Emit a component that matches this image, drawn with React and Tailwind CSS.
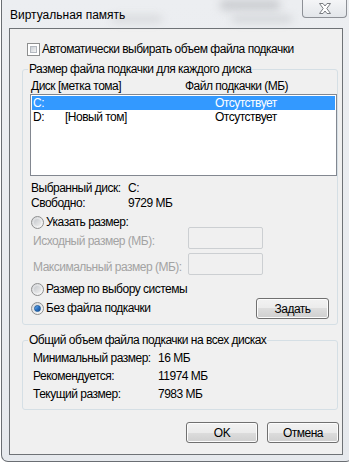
import React from "react";

const font = { fontFamily: '"Liberation Sans", Arial, sans-serif' };

function Checkbox() {
  return (
    <div className="w-[13px] h-[13px] border border-[#8e8f8f] bg-white p-[2px] shrink-0">
      <div className="w-full h-full border border-[#b4b9c0] bg-gradient-to-br from-[#cbd0d6] to-[#f4f4f4]" />
    </div>
  );
}

function Radio({ checked }) {
  return (
    <div className="w-[13px] h-[13px] rounded-full border border-[#8e8f8f] bg-gradient-to-br from-[#d4d6d9] to-[#fbfbfb] flex items-center justify-center shrink-0">
      {checked ? (
        <div className="w-[7px] h-[7px] rounded-full bg-gradient-to-br from-[#7ab8ee] via-[#2d75c7] to-[#144e91] border border-[#1c5a9c]" />
      ) : (
        <div className="w-[7px] h-[7px] rounded-full bg-gradient-to-br from-[#c6c9cd] to-[#eeeeee]" />
      )}
    </div>
  );
}

function Button({ children, w }) {
  return (
    <div
      className={`${w} h-[21px] rounded-[3px] border border-[#707070] flex items-center justify-center text-[12px] text-black bg-[linear-gradient(#f2f2f2_0%,#ebebeb_50%,#dddddd_50%,#cfcfcf_100%)] shadow-[inset_0_0_0_1px_#fcfcfc]`}
    >
      {children}
    </div>
  );
}

export default function App() {
  return (
    <div className="w-[349px] h-[464px] overflow-hidden bg-white whitespace-nowrap" style={font}>
      <div className="ml-[1px] w-[352px] h-[462px] rounded-b-[7px] border-x border-b border-[#6a6e73] bg-[linear-gradient(180deg,#eceef1_0%,#e6e9ed_100%)] flex flex-col">
        {/* Title bar */}
        <div className="h-[28px] shrink-0 flex items-start justify-between relative">
          <div className="pl-[8px] pt-[7px] text-[12px] leading-[16px] text-black relative z-10">Виртуальная память</div>
          <div className="absolute left-[218px] top-[0px] w-[60px] h-[10px] bg-[#c9cbcf] blur-[4px] rounded" />
          <div className="absolute left-[110px] top-[16px] w-[50px] h-[6px] bg-[#d3d5d8] blur-[4px] rounded" />
          <div className="absolute left-[230px] top-[16px] w-[60px] h-[6px] bg-[#cdd0d3] blur-[4px] rounded" />
          <div className="mr-[5px] w-[45px] h-[18px] rounded-b-[4px] border-x border-b border-[#8d9096] bg-[linear-gradient(#f4f5f7,#e3e6ea)] flex items-center justify-center relative">
            <svg width="14" height="11" viewBox="0 0 14 11">
              <path
                d="M1.5 0.5 H5 L7 3 L9 0.5 H12.5 L8.8 5.5 L12.5 10.5 H9 L7 8 L5 10.5 H1.5 L5.2 5.5 Z"
                fill="#ffffff"
                stroke="#7a7d82"
                strokeWidth="1"
                strokeLinejoin="round"
              />
            </svg>
          </div>
        </div>

        {/* Client area */}
        <div className="ml-[7px] w-[334px] h-[427px] shrink-0 border border-[#6e7276] bg-[#f0f0f0] flex flex-col text-[12px] tracking-[-0.5px] text-black">
          {/* Checkbox row */}
          <div className="mt-[14px] ml-[17px] flex items-center gap-[2px] h-[13px]">
            <Checkbox />
            <span className="leading-[13px]">Автоматически выбирать объем файла подкачки</span>
          </div>

          {/* Group 1 */}
          <fieldset className="mt-[6px] ml-[12px] w-[316px] border border-[#d5dfe5] rounded-[3px] pb-[5px]">
            <legend className="ml-[5px] px-[1px] leading-[14px]">Размер файла подкачки для каждого диска</legend>
            <div className="mt-[3px] flex leading-[14px] h-[14px]">
              <span className="ml-[8px] w-[154px]">Диск [метка тома]</span>
              <span>Файл подкачки (МБ)</span>
            </div>
            <div className="mt-[1px] ml-[7px] w-[307px] h-[82px] border border-[#828790] bg-white px-[1px] pt-[1px]">
              <div className="h-[14px] bg-[#3399ff] text-white flex items-center leading-[14px]">
                <span className="ml-[1px] w-[182px]">C:</span>
                <span>Отсутствует</span>
              </div>
              <div className="h-[14px] flex items-center leading-[14px]">
                <span className="ml-[1px] w-[32px]">D:</span>
                <span className="w-[150px]">[Новый том]</span>
                <span>Отсутствует</span>
              </div>
            </div>

            <div className="mt-[5px] ml-[8px] flex leading-[15px]">
              <span className="w-[97px]">Выбранный диск:</span>
              <span>C:</span>
            </div>
            <div className="ml-[8px] flex leading-[15px]">
              <span className="w-[97px]">Свободно:</span>
              <span>9729 МБ</span>
            </div>

            <div className="mt-[5px] ml-[8px] flex items-center gap-[2px] h-[13px]">
              <Radio />
              <span className="leading-[13px]">Указать размер:</span>
            </div>

            <div className="mt-[-2px] ml-[10px] flex items-start">
              <span className="w-[155px] mt-[7px] leading-[14px] text-[#a3a3a3]">Исходный размер (МБ):</span>
              <div className="w-[75px] h-[22px] rounded-[2px] border border-[#cccfd2] bg-[#f0f0f0]" />
            </div>
            <div className="mt-[4px] ml-[10px] flex items-start">
              <span className="w-[155px] mt-[7px] leading-[14px] text-[#a3a3a3]">Максимальный размер (МБ):</span>
              <div className="w-[75px] h-[22px] rounded-[2px] border border-[#cccfd2] bg-[#f0f0f0]" />
            </div>

            <div className="mt-[8px] ml-[8px] flex items-center gap-[2px] h-[13px]">
              <Radio />
              <span className="leading-[13px]">Размер по выбору системы</span>
            </div>
            <div className="mt-[2px] ml-[8px] flex items-center h-[21px]">
              <div className="flex items-center gap-[2px] w-[225px]">
                <Radio checked />
                <span className="leading-[13px]">Без файла подкачки</span>
              </div>
              <Button w="w-[73px]">Задать</Button>
            </div>
          </fieldset>

          {/* Group 2 */}
          <fieldset className="mt-[8px] ml-[12px] w-[316px] border border-[#d5dfe5] rounded-[3px] pb-[6px]">
            <legend className="ml-[5px] px-[1px] leading-[14px]">Общий объем файла подкачки на всех дисках</legend>
            <div className="mt-[2px] ml-[10px] flex leading-[18px]">
              <span className="w-[125px]">Минимальный размер:</span>
              <span>16 МБ</span>
            </div>
            <div className="ml-[10px] flex leading-[18px]">
              <span className="w-[125px]">Рекомендуется:</span>
              <span>11974 МБ</span>
            </div>
            <div className="ml-[10px] flex leading-[18px]">
              <span className="w-[125px]">Текущий размер:</span>
              <span>7983 МБ</span>
            </div>
          </fieldset>

          <div className="mt-[12px] ml-[176px] flex gap-[9px]">
            <Button w="w-[72px]">OK</Button>
            <Button w="w-[72px]">Отмена</Button>
          </div>
        </div>
      </div>
    </div>
  );
}
